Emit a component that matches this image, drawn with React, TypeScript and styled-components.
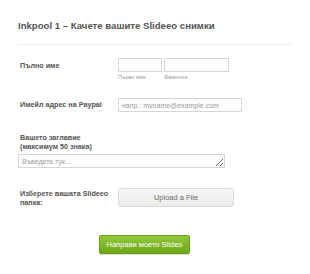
import styled, { createGlobalStyle } from "styled-components";

const GlobalStyle = createGlobalStyle`
  html, body {
    margin: 0;
    padding: 0;
    background: #ffffff;
    font-family: "Liberation Sans", Arial, sans-serif;
  }
`;

const Page = styled.div`
  width: 310px;
  height: 274px;
  padding: 0 19px 0 18px;
  box-sizing: border-box;
`;

const Header = styled.div`
  padding-top: 20px;
  padding-bottom: 12px;
  border-bottom: 1px solid #ebebeb;
`;

const Title = styled.h1`
  margin: 0;
  font-size: 9.6px;
  line-height: 12px;
  font-weight: bold;
  color: #555555;
`;

const Row = styled.div<{ top: number }>`
  display: flex;
  align-items: flex-start;
  margin-top: ${(p) => p.top}px;
`;

const Label = styled.div<{ offset?: number }>`
  width: 100px;
  padding-left: 2px;
  padding-top: ${(p) => p.offset ?? 0}px;
  box-sizing: border-box;
  font-size: 7.2px;
  line-height: 9px;
  font-weight: bold;
  color: #555555;
`;

const Stack = styled.div`
  display: flex;
  flex-direction: column;
`;

const NameGroup = styled.div`
  display: flex;
  gap: 2px;
`;

const NamePart = styled.div`
  display: flex;
  flex-direction: column;
`;

const TextInput = styled.input<{ w: number }>`
  width: ${(p) => p.w}px;
  height: 14px;
  box-sizing: border-box;
  border: 1px solid #d6d6d6;
  background: #ffffff;
  padding: 0 3px;
  font-family: "Liberation Sans", Arial, sans-serif;
  font-size: 7px;
  color: #555555;
  outline: none;
  &::placeholder {
    color: #9a9a9a;
  }
`;

const SubLabel = styled.span`
  font-size: 5.5px;
  line-height: 7px;
  margin-top: 2px;
  color: #9c9c9c;
`;

const TitleLabel = styled.div`
  padding-left: 2px;
  font-size: 7.2px;
  line-height: 9px;
  font-weight: bold;
  color: #555555;
`;

const Area = styled.textarea`
  display: block;
  width: 207px;
  height: 14px;
  margin-top: 3px;
  box-sizing: border-box;
  border: 1px solid #d6d6d6;
  padding: 2px 3px 0;
  font-family: "Liberation Sans", Arial, sans-serif;
  font-size: 7px;
  line-height: 9px;
  overflow: hidden;
  resize: both;
  outline: none;
  &::placeholder {
    color: #9a9a9a;
  }
`;

const UploadButton = styled.button`
  width: 116px;
  height: 19px;
  border: 1px solid #dcdcdc;
  border-radius: 3px;
  background: linear-gradient(#f5f5f5, #ececec);
  font-family: "Liberation Sans", Arial, sans-serif;
  font-size: 7.5px;
  color: #6b6b6b;
  padding: 0;
  cursor: pointer;
`;

const SubmitRow = styled.div`
  display: flex;
  margin-top: 28px;
  padding-left: 81px;
`;

const SubmitButton = styled.button`
  width: 91px;
  height: 19px;
  border: 1px solid #6a9e17;
  border-radius: 2px;
  background: linear-gradient(#92c83c, #6ea716);
  box-shadow: 0 1px 1px rgba(0, 0, 0, 0.15);
  font-family: "Liberation Sans", Arial, sans-serif;
  font-size: 7.5px;
  color: #ffffff;
  padding: 0;
  cursor: pointer;
`;

export default function App() {
  return (
    <>
      <GlobalStyle />
      <Page>
        <Header>
          <Title>Inkpool 1 – Качете вашите Slideeo снимки</Title>
        </Header>

        <Row top={13}>
          <Label offset={3}>Пълно име</Label>
          <NameGroup>
            <NamePart>
              <TextInput w={44} />
              <SubLabel>Първо име</SubLabel>
            </NamePart>
            <NamePart>
              <TextInput w={65} />
              <SubLabel>Фамилия</SubLabel>
            </NamePart>
          </NameGroup>
        </Row>

        <Row top={17}>
          <Label offset={2}>Имейл адрес на Paypal</Label>
          <TextInput w={124} placeholder="напр.: myname@example.com" />
        </Row>

        <Stack style={{ marginTop: 21 }}>
          <TitleLabel>
            Вашето заглавие
            <br />
            (максимум 50 знака)
          </TitleLabel>
          <Area placeholder="Въведете тук..." />
        </Stack>

        <Row top={20}>
          <Label offset={1}>Изберете вашата Slideeo папка:</Label>
          <UploadButton>Upload a File</UploadButton>
        </Row>

        <SubmitRow>
          <SubmitButton>Направи моето Slideo</SubmitButton>
        </SubmitRow>
      </Page>
    </>
  );
}
